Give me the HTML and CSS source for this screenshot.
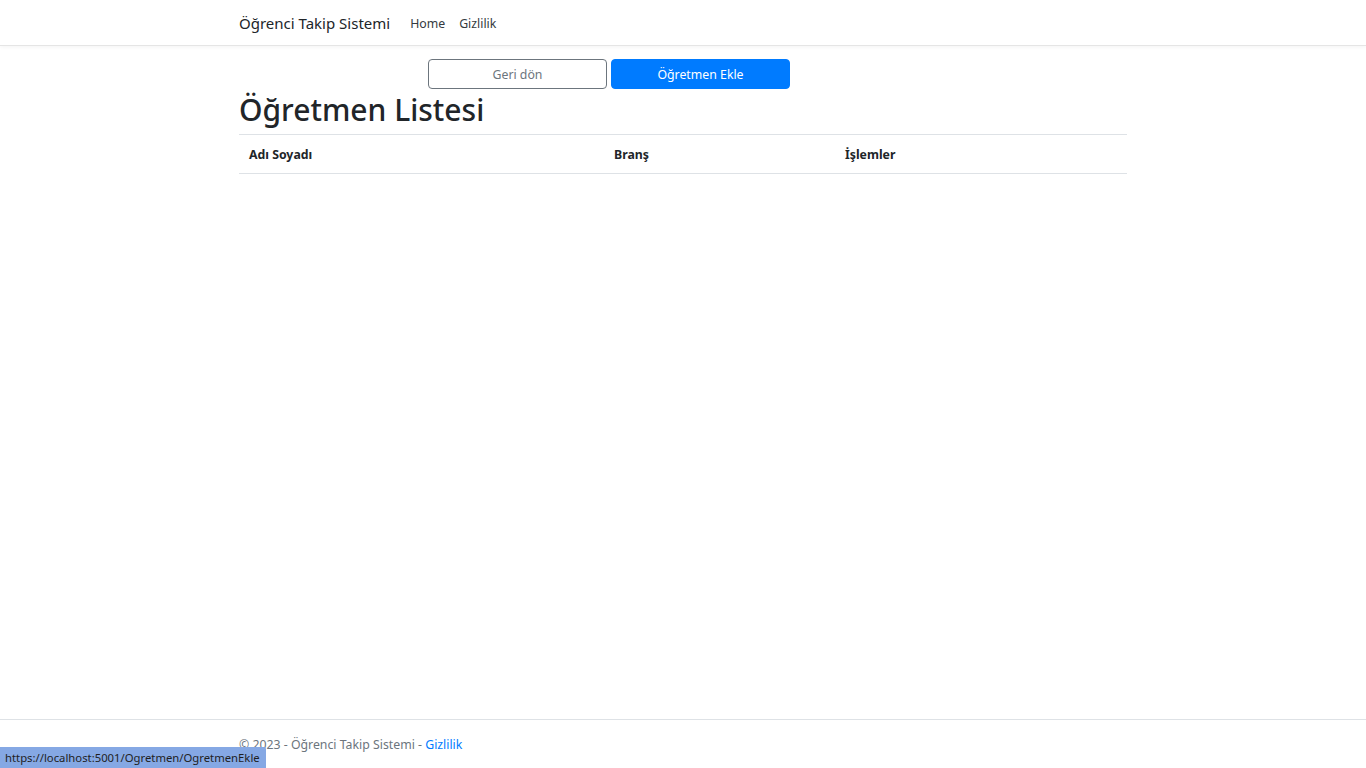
FILE: index.html
```html
<!DOCTYPE html>
<html lang="tr">
<head>
<meta charset="utf-8">
<title>Öğretmen Listesi - Öğrenci Takip Sistemi</title>
<link rel="stylesheet" href="styles.css">
</head>
<body>
<header class="navbar">
  <div class="container nav-inner">
    <a class="brand" href="#">Öğrenci Takip Sistemi</a>
    <nav class="nav-links">
      <a href="#">Home</a>
      <a href="#">Gizlilik</a>
    </nav>
  </div>
</header>
<main class="container main">
  <div class="actions">
    <a class="btn btn-outline" href="#">Geri dön</a>
    <a class="btn btn-primary" href="#">Öğretmen Ekle</a>
  </div>
  <h1 class="title">Öğretmen Listesi</h1>
  <table class="table">
    <thead>
      <tr>
        <th class="c1">Adı Soyadı</th>
        <th class="c2">Branş</th>
        <th class="c3">İşlemler</th>
      </tr>
    </thead>
    <tbody></tbody>
  </table>
</main>
<footer class="footer">
  <div class="container">© 2023 - Öğrenci Takip Sistemi - <a href="#">Gizlilik</a></div>
</footer>
<div class="status">https://localhost:5001/Ogretmen/OgretmenEkle</div>
</body>
</html>
```
FILE: styles.css
```css
* { box-sizing: border-box; }
html, body { height: 100%; }
body {
  margin: 0;
  font-family: "Noto Sans", "Open Sans", sans-serif;
  font-size: 12.3px;
  color: #212529;
  background: #fff;
  display: flex;
  flex-direction: column;
  min-height: 100vh;
}
a { text-decoration: none; }
.container { width: 888px; margin: 0 auto; }
.navbar {
  height: 46px;
  border-bottom: 1px solid #e5e5e5;
  box-shadow: 0 1px 4px rgba(0,0,0,.05);
  display: flex;
  align-items: center;
}
.nav-inner { display: flex; align-items: center; }
.brand { font-size: 15px; color: #212529; margin-right: 20px; }
.nav-links { display: flex; gap: 14px; padding-top: 2px; }
.nav-links a { color: #343a40; font-size: 12.3px; }
.main { flex: 1; }
.actions {
  display: flex;
  gap: 4px;
  margin-top: 13px;
  padding-left: 189px;
}
.btn {
  width: 179px;
  height: 30px;
  border-radius: 4px;
  display: flex;
  align-items: center;
  justify-content: center;
  font-size: 12.3px;
}
.btn-outline { border: 1px solid #6c757d; color: #6c757d; }
.btn-primary { background: #007bff; border: 1px solid #007bff; color: #fff; }
.title {
  font-size: 30px;
  font-weight: 500;
  margin: 1px 0 4px;
  line-height: 40px;
}
.table { width: 100%; border-collapse: collapse; }
.table th {
  text-align: left;
  font-weight: 700;
  font-size: 12.3px;
  padding: 9px 10px;
  height: 39px;
  border-top: 1px solid #dee2e6;
  border-bottom: 1px solid #dee2e6;
}
.c1 { width: 365px; }
.c2 { width: 231px; }
.footer {
  border-top: 1px solid #dee2e6;
  height: 49px;
  line-height: 49px;
  color: #6c757d;
  font-size: 12.3px;
  white-space: nowrap;
}
.footer a { color: #007bff; }
.status {
  position: fixed;
  left: 0;
  bottom: 0;
  height: 21px;
  padding: 0 6px 0 5px;
  background: #85a8e4;
  color: #1f1f1f;
  font-size: 11.3px;
  line-height: 21px;
  border-top-right-radius: 2px;
}
```
